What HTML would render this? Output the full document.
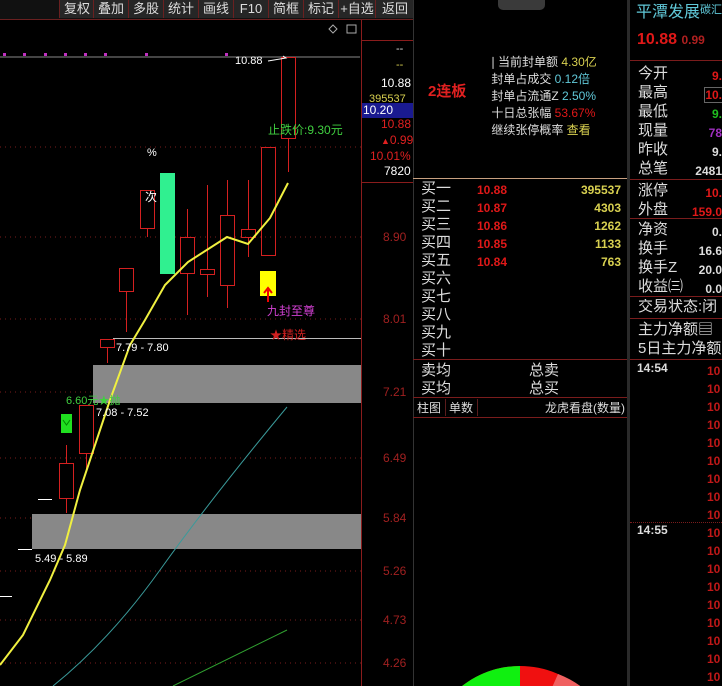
<!DOCTYPE html><html><head><meta charset="utf-8"><style>
*{margin:0;padding:0}html,body{width:722px;height:686px;overflow:hidden}body{background:#000;position:relative;font-family:"Liberation Sans","Noto Sans CJK SC",sans-serif}
.a{position:absolute;white-space:nowrap;line-height:1}
.tb{position:absolute;top:0;height:18px;line-height:18px;color:#ddd;font-size:13px;text-align:center;background:#262626;border-left:1px solid #6a2020}
.w{color:#ddd}.r{color:#e01818}.y{color:#d8d050}.c{color:#60c8d8}
.hl{position:absolute;height:1px;background:#7a1c1c}
</style></head><body>
<div style="position:absolute;left:0;top:0;width:413px;height:19px;background:#111;border-bottom:1px solid #6a2020"></div>
<div class="tb" style="left:59px;width:34px">复权</div>
<div class="tb" style="left:93px;width:34px">叠加</div>
<div class="tb" style="left:128px;width:34px">多股</div>
<div class="tb" style="left:163px;width:34px">统计</div>
<div class="tb" style="left:198px;width:34px">画线</div>
<div class="tb" style="left:233px;width:34px">F10</div>
<div class="tb" style="left:268px;width:34px">简框</div>
<div class="tb" style="left:303px;width:34px">标记</div>
<div class="tb" style="left:338px;width:36px">+自选</div>
<div class="tb" style="left:375px;width:38px">返回</div>
<svg class="a" style="left:0;top:0" width="414" height="686">
<line x1="361.5" y1="20" x2="361.5" y2="686" stroke="#8a1c1c"/>
<line x1="362" y1="40.5" x2="413" y2="40.5" stroke="#8a1c1c"/>
<line x1="362" y1="182.5" x2="413" y2="182.5" stroke="#8a1c1c"/>
<path d="M333 25l4 4-4 4-4-4z" fill="none" stroke="#aaa"/><rect x="347" y="25" width="9" height="8" fill="none" stroke="#aaa"/>
<line x1="0" y1="57" x2="360" y2="57" stroke="#888"/>
<g fill="#c030c0"><rect x="3" y="53" width="3" height="3"/><rect x="23" y="53" width="3" height="3"/><rect x="44" y="53" width="3" height="3"/><rect x="64" y="53" width="3" height="3"/><rect x="84" y="53" width="3" height="3"/><rect x="104" y="53" width="3" height="3"/><rect x="145" y="53" width="3" height="3"/><rect x="225" y="53" width="3" height="3"/></g>
<g stroke="#7a1c1c" stroke-dasharray="1 4"><line x1="0" y1="147" x2="361" y2="147"/><line x1="0" y1="237" x2="361" y2="237"/><line x1="0" y1="319" x2="361" y2="319"/><line x1="0" y1="392" x2="361" y2="392"/><line x1="0" y1="458" x2="361" y2="458"/><line x1="0" y1="518" x2="361" y2="518"/><line x1="0" y1="571" x2="361" y2="571"/><line x1="0" y1="620" x2="361" y2="620"/><line x1="0" y1="663" x2="361" y2="663"/></g>
<rect x="32" y="514" width="329" height="35" fill="#888"/>
<rect x="93" y="365" width="268" height="38" fill="#888"/>
<line x1="113" y1="338.5" x2="361" y2="338.5" stroke="#bbb"/>
<g stroke="#fff"><line x1="0" y1="596.5" x2="12" y2="596.5"/><line x1="18" y1="549.5" x2="32" y2="549.5"/><line x1="38" y1="499.5" x2="52" y2="499.5"/></g>
<g stroke="#d42020" fill="none">
<rect x="59.5" y="463.5" width="14" height="35"/><line x1="66.5" y1="445" x2="66.5" y2="463"/><line x1="66.5" y1="499" x2="66.5" y2="513"/>
<rect x="79.5" y="405.5" width="14" height="48"/><line x1="86.5" y1="454" x2="86.5" y2="470"/>
<rect x="100.5" y="339.5" width="14" height="8"/><line x1="107.5" y1="348" x2="107.5" y2="363"/>
<rect x="119.5" y="268.5" width="14" height="23"/><line x1="126.5" y1="292" x2="126.5" y2="332"/>
<rect x="140.5" y="190.5" width="14" height="38"/><line x1="147.5" y1="229" x2="147.5" y2="237"/>
<rect x="180.5" y="237.5" width="14" height="36"/><line x1="187.5" y1="209" x2="187.5" y2="237"/><line x1="187.5" y1="274" x2="187.5" y2="315"/>
<rect x="200.5" y="269.5" width="14" height="5"/><line x1="207.5" y1="185" x2="207.5" y2="269"/><line x1="207.5" y1="275" x2="207.5" y2="297"/>
<rect x="220.5" y="215.5" width="14" height="70"/><line x1="227.5" y1="180" x2="227.5" y2="215"/><line x1="227.5" y1="286" x2="227.5" y2="308"/>
<rect x="241.5" y="229.5" width="14" height="8"/><line x1="248.5" y1="180" x2="248.5" y2="229"/><line x1="248.5" y1="238" x2="248.5" y2="257"/>
<rect x="261.5" y="147.5" width="14" height="108"/>
<rect x="281.5" y="57.5" width="14" height="81"/><line x1="288.5" y1="139" x2="288.5" y2="172"/>
</g>
<rect x="160" y="173" width="15" height="101" fill="#30f090"/>
<rect x="61" y="414" width="11" height="19" fill="#20e020"/><path d="M63 420l3.5 5 3.5-5" stroke="#080" fill="none"/>
<rect x="260" y="271" width="16" height="25" fill="#ffff00"/><path d="M268 302v-12M264 293l4-5 4 5" stroke="#e00" stroke-width="2" fill="none"/>
<path d="M268 61l18-3-3-2" stroke="#fff" fill="none"/>
<polyline points="0,665 23,635 50,580 65,545 80,490 110,400 130,345 145,320 165,285 188,262 227,237 248,244 270,218 288,183" fill="none" stroke="#f0f040" stroke-width="2"/>
<path d="M53 686 Q110 640 160 570 T287 407" fill="none" stroke="#3a9a9a"/>
<line x1="173" y1="686" x2="287" y2="630" stroke="#30a030"/>
<rect x="362" y="103" width="51" height="15" fill="#1a1a90"/>
</svg>
<div class="a" style="left:235px;top:56px;font-size:11px;color:#fff">10.88</div>
<div class="a" style="left:268px;top:124px;font-size:12px;color:#40d040">止跌价:9.30元</div>
<div class="a" style="left:147px;top:148px;font-size:11px;color:#fff">%</div>
<div class="a" style="left:145px;top:191px;font-size:12px;color:#fff">次</div>
<div class="a" style="left:267px;top:305px;font-size:12px;color:#d040d0">九封至尊</div>
<div class="a" style="left:270px;top:329px;font-size:12px;color:#d02020">★精选</div>
<div class="a" style="left:116px;top:343px;font-size:11px;color:#fff">7.79 - 7.80</div>
<div class="a" style="left:66px;top:396px;font-size:11px;color:#40d040">6.60元★抛</div>
<div class="a" style="left:96px;top:408px;font-size:11px;color:#fff">7.08 - 7.52</div>
<div class="a" style="left:35px;top:554px;font-size:11px;color:#fff">5.49 - 5.89</div>
<div class="a" style="left:396px;top:44px;font-size:11px;color:#ddd">--</div>
<div class="a" style="left:396px;top:60px;font-size:11px;color:#d8d050">--</div>
<div class="a" style="left:381px;top:77px;font-size:12px;color:#fff">10.88</div>
<div class="a" style="left:369px;top:94px;font-size:11px;color:#d8d050">395537</div>
<div class="a" style="left:363px;top:104px;font-size:12px;color:#fff">10.20</div>
<div class="a" style="left:381px;top:118px;font-size:12px;color:#e02020">10.88</div>
<div class="a" style="left:381px;top:134px;font-size:12px;color:#e02020"><span style="font-size:9px">▲</span>0.99</div>
<div class="a" style="left:370px;top:150px;font-size:12px;color:#e02020">10.01%</div>
<div class="a" style="left:384px;top:165px;font-size:12px;color:#fff">7820</div>
<div class="a" style="left:383px;top:231px;font-size:12px;color:#a02020">8.90</div>
<div class="a" style="left:383px;top:313px;font-size:12px;color:#a02020">8.01</div>
<div class="a" style="left:383px;top:386px;font-size:12px;color:#a02020">7.21</div>
<div class="a" style="left:383px;top:452px;font-size:12px;color:#a02020">6.49</div>
<div class="a" style="left:383px;top:512px;font-size:12px;color:#a02020">5.84</div>
<div class="a" style="left:383px;top:565px;font-size:12px;color:#a02020">5.26</div>
<div class="a" style="left:383px;top:614px;font-size:12px;color:#a02020">4.73</div>
<div class="a" style="left:383px;top:657px;font-size:12px;color:#a02020">4.26</div>
<div style="position:absolute;left:413px;top:0;width:1px;height:686px;background:#333"></div>
<div style="position:absolute;left:498px;top:0;width:47px;height:10px;background:#3a3a3a;border-radius:0 0 5px 5px"></div>
<div class="a" style="left:428px;top:84px;font-size:15px;font-weight:bold;color:#e02020">2连板</div>
<div class="a w" style="left:488px;top:54px;font-size:12px;line-height:17px">
<div>&#x2758;当前封单额 <span class="y">4.30亿</span></div>
<div>&nbsp;封单占成交 <span class="c">0.12倍</span></div>
<div>&nbsp;封单占流通Z <span class="c">2.50%</span></div>
<div>&nbsp;十日总张幅 <span class="r">53.67%</span></div>
<div>&nbsp;继续张停概率 <span class="y">查看</span></div></div>
<div style="position:absolute;left:413px;top:178px;width:215px;height:1px;background:#c8a080"></div>
<div class="a w" style="left:421px;top:180px;font-size:15px;line-height:18px">买一<br>买二<br>买三<br>买四<br>买五<br>买六<br>买七<br>买八<br>买九<br>买十</div>
<div class="a r" style="left:477px;top:181px;font-size:12px;font-weight:bold;line-height:18px">10.88<br>10.87<br>10.86<br>10.85<br>10.84</div>
<div class="a y" style="left:560px;top:181px;width:61px;text-align:right;font-size:12px;font-weight:bold;line-height:18px">395537<br>4303<br>1262<br>1133<br>763</div>
<div class="hl" style="left:413px;top:359px;width:215px"></div>
<div class="a w" style="left:421px;top:362px;font-size:15px;line-height:18px">卖均<br>买均</div>
<div class="a w" style="left:529px;top:362px;font-size:15px;line-height:18px">总卖<br>总买</div>
<div class="hl" style="left:413px;top:397px;width:215px"></div>
<div class="hl" style="left:413px;top:417px;width:215px"></div>
<div class="a w" style="left:417px;top:402px;font-size:12px">柱图</div>
<div style="position:absolute;left:445px;top:399px;width:1px;height:17px;background:#5a1c1c"></div>
<div class="a w" style="left:449px;top:402px;font-size:12px">单数</div>
<div style="position:absolute;left:477px;top:399px;width:1px;height:17px;background:#5a1c1c"></div>
<div class="a w" style="left:545px;top:402px;font-size:12px">龙虎看盘(数量)</div>
<svg class="a" style="left:413px;top:650px" width="215" height="36"><circle cx="107" cy="110" r="94" fill="#f01010"/><path d="M107 110 L107 16 A94 94 0 0 0 13 110Z" fill="#10f010"/><path d="M107 110 L145 24 A94 94 0 0 1 190 60Z" fill="#f06060"/></svg>
<div style="position:absolute;left:627px;top:0;width:3px;height:686px;background:#2a2a2a"></div>
<div class="a c" style="left:636px;top:5px;font-size:16px">平潭发展<span style="font-size:11px;vertical-align:top">碳汇</span></div>
<div class="a r" style="left:637px;top:32px;font-size:16px;font-weight:bold">10.88 <span style="font-size:12px;color:#b02020">0.99</span></div>
<div class="hl" style="left:630px;top:60px;width:92px"></div>
<div class="a w" style="left:638px;top:64px;font-size:15px;line-height:19px">今开<br>最高<br>最低<br>现量<br>昨收<br>总笔</div>
<div class="a" style="left:672px;top:67px;font-size:12px;font-weight:bold;line-height:19px;text-align:right;width:50px;overflow:hidden"><span class="r">9.</span><br><span class="r" style="outline:1px solid #666">10.</span><br><span style="color:#20c020">9.</span><br><span style="color:#a030c0">78</span><br><span class="w">9.</span><br><span class="w">2481</span></div>
<div class="hl" style="left:630px;top:179px;width:92px"></div>
<div class="a w" style="left:638px;top:181px;font-size:15px;line-height:19px">涨停<br>外盘</div>
<div class="a r" style="left:672px;top:184px;font-size:12px;font-weight:bold;line-height:19px;text-align:right;width:50px;overflow:hidden">10.<br>159.0</div>
<div class="hl" style="left:630px;top:218px;width:92px"></div>
<div class="a w" style="left:638px;top:220px;font-size:15px;line-height:19px">净资<br>换手<br>换手Z<br>收益㈢</div>
<div class="a w" style="left:672px;top:223px;font-size:12px;font-weight:bold;line-height:19px;text-align:right;width:50px;overflow:hidden">0.<br>16.6<br>20.0<br>0.0</div>
<div class="hl" style="left:630px;top:296px;width:92px"></div>
<div class="a w" style="left:638px;top:299px;font-size:15px;width:84px;overflow:hidden">交易状态:闭</div>
<div class="hl" style="left:630px;top:318px;width:92px"></div>
<div class="a w" style="left:638px;top:320px;font-size:15px;line-height:19px;width:84px;overflow:hidden">主力净额▤<br>5日主力净额</div>
<div class="hl" style="left:630px;top:359px;width:92px"></div>
<div class="a w" style="left:637px;top:362px;font-size:12px;font-weight:bold">14:54</div>
<div class="a w" style="left:637px;top:524px;font-size:12px;font-weight:bold">14:55</div>
<div style="position:absolute;left:630px;top:522px;width:92px;border-top:1px dotted #7a1c1c"></div>
<div class="a" style="left:707px;top:362px;width:15px;height:324px;overflow:hidden;font-size:12px;font-weight:bold;color:#c01818;line-height:18px">10<br>10<br>10<br>10<br>10<br>10<br>10<br>10<br>10<br>10<br>10<br>10<br>10<br>10<br>10<br>10<br>10<br>10</div>
</body></html>
